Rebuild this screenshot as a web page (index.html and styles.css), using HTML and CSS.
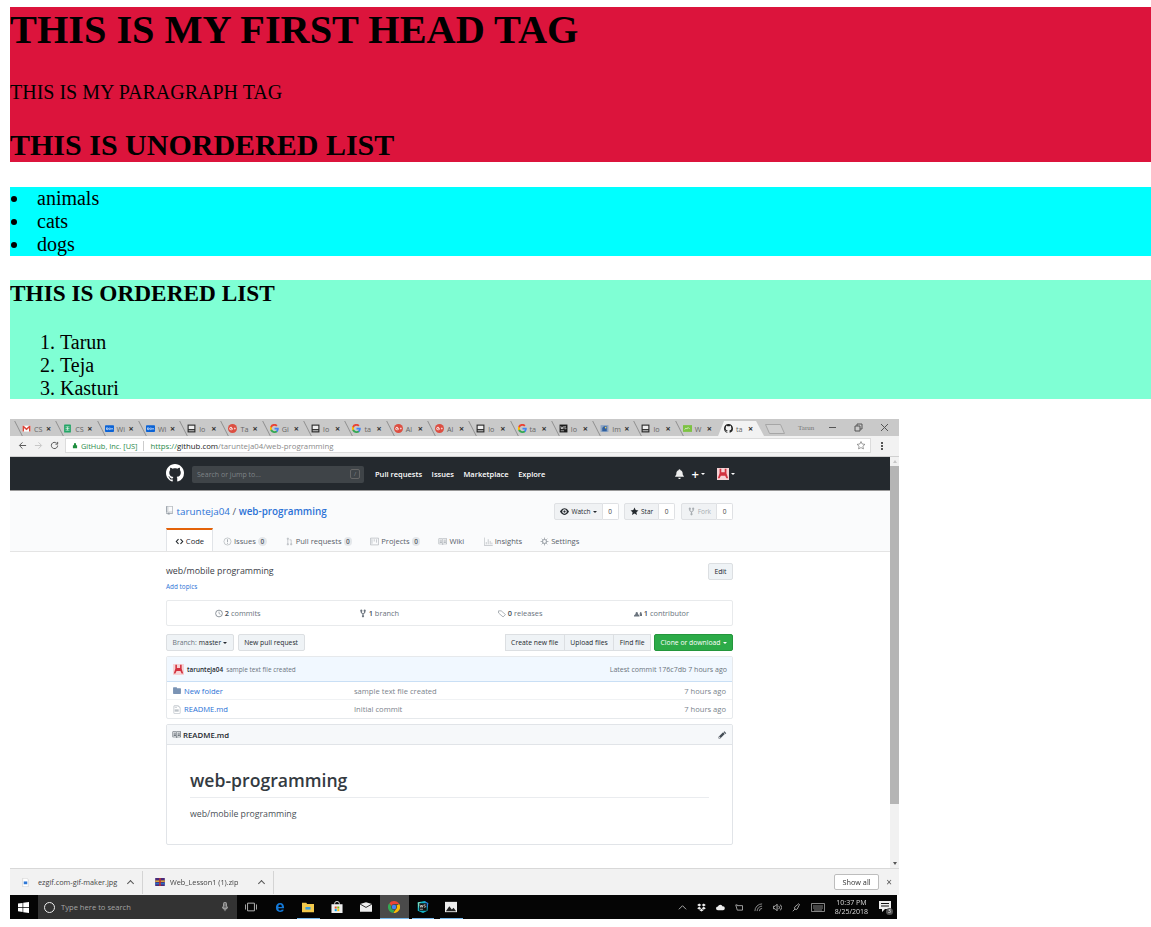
FILE: index.html
```html
<!DOCTYPE html>
<html>
<head>
<meta charset="utf-8">
<title>My first page</title>
<link rel="stylesheet" href="styles.css">
</head>
<body>

<svg class="sprite" xmlns="http://www.w3.org/2000/svg">
  <symbol id="i-github" viewBox="0 0 16 16"><path d="M8 0C3.58 0 0 3.58 0 8c0 3.54 2.29 6.53 5.47 7.59.4.07.55-.17.55-.38 0-.19-.01-.82-.01-1.49-2.01.37-2.53-.49-2.69-.94-.09-.23-.48-.94-.82-1.13-.28-.15-.68-.52-.01-.53.63-.01 1.08.58 1.23.82.72 1.21 1.87.87 2.33.66.07-.52.28-.87.51-1.07-1.78-.2-3.64-.89-3.64-3.95 0-.87.31-1.59.82-2.15-.08-.2-.36-1.02.08-2.12 0 0 .67-.21 2.2.82.64-.18 1.32-.27 2-.27.68 0 1.36.09 2 .27 1.53-1.04 2.2-.82 2.2-.82.44 1.1.16 1.92.08 2.12.51.56.82 1.27.82 2.15 0 3.07-1.87 3.75-3.65 3.95.29.25.54.73.54 1.48 0 1.07-.01 1.93-.01 2.2 0 .21.15.46.55.38A8.013 8.013 0 0 0 16 8c0-4.42-3.58-8-8-8z"/></symbol>
  <symbol id="i-gmail" viewBox="0 0 16 16"><rect x="1" y="3" width="14" height="10.5" fill="#fff"/><path d="M1 13.5V3h2l5 4.5L13 3h2v10.5h-2.5V7L8 11 3.5 7v6.5z" fill="#db4437"/></symbol>
  <symbol id="i-sheets" viewBox="0 0 16 16"><rect x="2" y="1" width="12" height="14" rx="1" fill="#23a566"/><path d="M4.5 5h7M4.5 8h7M4.5 11h7M8 5v6" stroke="#fff" fill="none"/></symbol>
  <symbol id="i-box" viewBox="0 0 16 16"><rect x="0" y="2" width="16" height="12" rx="1.5" fill="#0b63d6"/><path d="M3 10.5V6M3 8.5a1.4 1.4 0 1 0 3 0 1.4 1.4 0 1 0-3 0M7 8.5a1.4 1.4 0 1 0 3 0 1.4 1.4 0 1 0-3 0M11 7l3 3M14 7l-3 3" stroke="#fff" fill="none"/></symbol>
  <symbol id="i-dark" viewBox="0 0 16 16"><rect x="1" y="1" width="14" height="14" fill="#2b2b2b"/><rect x="3" y="3" width="10" height="6" fill="#eee"/><path d="M3 11h10v2H3z" fill="#bbb"/></symbol>
  <symbol id="i-gplus" viewBox="0 0 16 16"><circle cx="8" cy="8" r="8" fill="#dc4e41"/><path d="M8.5 7.5H5.5v1.4h1.6a1.7 1.7 0 1 1-.5-2l1-1a3 3 0 1 0 1 2.2zM10.5 7.5h1.2V6.3h1v1.2h1.2v1h-1.2v1.2h-1V8.500h-1.200z" fill="#fff"/></symbol>
  <symbol id="i-google" viewBox="0 0 16 16"><path d="M15.600 8.200c0-.6-.1-1.100-.2-1.600H8v3h4.300a3.700 3.700 0 0 1-1.600 2.400v2h2.600c1.500-1.400 2.300-3.400 2.300-5.800z" fill="#4285f4"/><path d="M8 16c2.200 0 4-.7 5.300-2l-2.600-2c-.7.500-1.600.8-2.700.8-2.100 0-3.900-1.400-4.500-3.300H.5v2.100A8 8 0 0 0 8 16z" fill="#34a853"/><path d="M3.500 9.500a4.800 4.800 0 0 1 0-3V4.400H.5a8 8 0 0 0 0 7.200z" fill="#fbbc05"/><path d="M8 3.200c1.200 0 2.200.4 3.100 1.200l2.300-2.300A8 8 0 0 0 .5 4.400l3 2.100C4.100 4.600 5.900 3.200 8 3.200z" fill="#ea4335"/></symbol>
  <symbol id="i-chrome" viewBox="0 0 16 16"><path d="M8 0a8 8 0 0 1 6.930 4H8a4 4 0 0 0-3.700 2.500L1.700 3A8 8 0 0 1 8 0z" fill="#ea4335"/><path d="M14.930 4A8 8 0 0 1 7 16l3.700-5A4 4 0 0 0 11.500 6z" fill="#fbbc05"/><path d="M7 16A8 8 0 0 1 1.700 3l2.600 3.500a4 4 0 0 0 4 5.500z" fill="#34a853"/><circle cx="8" cy="8" r="3" fill="#4285f4"/></symbol>
  <symbol id="i-ws" viewBox="0 0 16 16"><rect x="1" y="1" width="14" height="14" fill="#1b1b1b"/><path d="M3 4l1.200 5L5.500 5l1.300 4L8 4M9.500 8c1 1 3 .8 3-.3S9.500 6.500 9.500 5.300s2-1.300 3-.5M3 12h6" stroke="#fff" fill="none"/></symbol>
  <symbol id="i-ws-app" viewBox="0 0 16 16"><path d="M1 2l9-2 5 3-1 10-6 3-7-3z" fill="#13b5c9"/><path d="M10 0l5 3-1 6z" fill="#2f7be0"/><path d="M1 2l4-1-3 9z" fill="#7de0c0"/><rect x="3" y="3" width="10" height="10" fill="#111"/><path d="M4 5l1 3.500L6 5.500l1 3L8 5M9 8c.8.6 2.500.5 2.500-.4S9 6.500 9 5.700s1.700-1 2.500-.4M4 11h4" stroke="#fff" stroke-width=".8" fill="none"/></symbol>
  <symbol id="i-python" viewBox="0 0 16 16"><rect x="1" y="2" width="14" height="12" fill="#8aa3c4"/><path d="M4 13V7l3-3h5v9z" fill="#2f5f9e"/><circle cx="10" cy="6.500" r="1.400" fill="#f4d35e"/></symbol>
  <symbol id="i-grn" viewBox="0 0 16 16"><rect x="0" y="2" width="16" height="12" fill="#7cc242"/><path d="M3 10l2-3 2 2 2-3 3 3" stroke="#fff" fill="none"/></symbol>
  <symbol id="i-repo" viewBox="0 0 12 16"><path d="M4 9H3V8h1zm0-3H3v1h1zm0-2H3v1h1zm0-2H3v1h1zm8-1v12c0 .55-.45 1-1 1H6v2l-1.500-1.500L3 16v-2H1c-.55 0-1-.45-1-1V1c0-.55.45-1 1-1h10c.55 0 1 .45 1 1zm-1 10H1v2h2v-1h3v1h5zm0-10H2v9h9z"/></symbol>
  <symbol id="i-star" viewBox="0 0 14 16"><path d="M14 6l-4.900-.64L7 1 4.900 5.360 0 6l3.600 3.260L2.670 14 7 11.670 11.330 14l-.93-4.740z"/></symbol>
  <symbol id="i-eye" viewBox="0 0 16 16"><path d="M8.060 2C3 2 0 8 0 8s3 6 8.060 6C13 14 16 8 16 8s-3-6-7.940-6zM8 12c-2.200 0-4-1.780-4-4 0-2.200 1.800-4 4-4 2.220 0 4 1.800 4 4 0 2.220-1.780 4-4 4zm2-4c0 1.110-.89 2-2 2-1.110 0-2-.89-2-2 0-1.110.89-2 2-2 1.110 0 2 .89 2 2z"/></symbol>
  <symbol id="i-fork" viewBox="0 0 10 16"><path d="M8 1a1.990 1.990 0 0 0-1 3.700V6L5 8 3 6V4.700A1.990 1.990 0 0 0 2 1a1.990 1.990 0 0 0-1 3.700V6.500l3 3v1.800A1.990 1.990 0 0 0 5 15a1.990 1.990 0 0 0 1-3.700V9.500l3-3V4.700A1.990 1.990 0 0 0 8 1z"/></symbol>
  <symbol id="i-folder" viewBox="0 0 14 16"><path d="M13 4H7V3c0-.66-.31-1-1-1H1c-.55 0-1 .45-1 1v10c0 .55.45 1 1 1h12c.55 0 1-.45 1-1V5c0-.55-.45-1-1-1z"/></symbol>
  <symbol id="i-file" viewBox="0 0 12 16"><path d="M6 5H2V4h4zM2 8h7V7H2zm0 2h7V9H2zm0 2h7v-1H2zm10-7.500V14c0 .55-.45 1-1 1H1c-.55 0-1-.45-1-1V2c0-.55.45-1 1-1h7.500zM11 5L8 2H1v12h10z"/></symbol>
  <symbol id="i-book" viewBox="0 0 16 16"><path d="M3 5h4v1H3zm0 3h4V7H3zm0 2h4V9H3zm11-5h-4v1h4zm0 2h-4v1h4zm0 2h-4v1h4zm2-6v9c0 .55-.45 1-1 1H9.500l-1 1-1-1H2c-.55 0-1-.45-1-1V3c0-.55.45-1 1-1h5.500l1 1 1-1H15c.55 0 1 .45 1 1zM8 3.500L7.500 3H2v9h6zm7-.5H9.500l-.5.5V12h6z"/></symbol>
  <symbol id="i-avatar" viewBox="0 0 14 14"><rect width="14" height="14" fill="#f6d3d6"/><path d="M3 1h2v4h4V1h2v5l2 6h-2L9.500 9h-5L3 12H1l2-6z" fill="#d2323f"/></symbol>
  <symbol id="i-pencil" viewBox="0 0 14 16"><path d="M0 12v3h3l8-8-3-3zm3 2H1v-2h1v1h1zM10.300 9L13.700 5.600l-3.300-3.300L9 3.700 12.300 7z"/></symbol>
</svg>

<section class="head-box">
  <h1>THIS IS MY FIRST HEAD TAG</h1>
  <p>THIS IS MY PARAGRAPH TAG</p>
  <h2>THIS IS UNORDERED LIST</h2>
</section>

<ul class="animal-list">
  <li>animals</li>
  <li>cats</li>
  <li>dogs</li>
</ul>

<section class="name-box">
  <h3>THIS IS ORDERED LIST</h3>
  <ol>
    <li>Tarun</li>
    <li>Teja</li>
    <li>Kasturi</li>
  </ol>
</section>

<div class="shot">

  <div class="tabs">
    <div class="tab"><svg class="ico"><use href="#i-gmail"/></svg><span>CS</span><b>×</b></div>
    <div class="tab"><svg class="ico"><use href="#i-sheets"/></svg><span>CS</span><b>×</b></div>
    <div class="tab"><svg class="ico"><use href="#i-box"/></svg><span>Wi</span><b>×</b></div>
    <div class="tab"><svg class="ico"><use href="#i-box"/></svg><span>Wi</span><b>×</b></div>
    <div class="tab"><svg class="ico"><use href="#i-dark"/></svg><span>lo</span><b>×</b></div>
    <div class="tab"><svg class="ico"><use href="#i-gplus"/></svg><span>Ta</span><b>×</b></div>
    <div class="tab"><svg class="ico"><use href="#i-google"/></svg><span>Gi</span><b>×</b></div>
    <div class="tab"><svg class="ico"><use href="#i-dark"/></svg><span>lo</span><b>×</b></div>
    <div class="tab"><svg class="ico"><use href="#i-google"/></svg><span>ta</span><b>×</b></div>
    <div class="tab"><svg class="ico"><use href="#i-gplus"/></svg><span>Al</span><b>×</b></div>
    <div class="tab"><svg class="ico"><use href="#i-gplus"/></svg><span>Al</span><b>×</b></div>
    <div class="tab"><svg class="ico"><use href="#i-dark"/></svg><span>lo</span><b>×</b></div>
    <div class="tab"><svg class="ico"><use href="#i-google"/></svg><span>ta</span><b>×</b></div>
    <div class="tab"><svg class="ico"><use href="#i-ws"/></svg><span>lo</span><b>×</b></div>
    <div class="tab"><svg class="ico"><use href="#i-python"/></svg><span>Im</span><b>×</b></div>
    <div class="tab"><svg class="ico"><use href="#i-dark"/></svg><span>lo</span><b>×</b></div>
    <div class="tab"><svg class="ico"><use href="#i-grn"/></svg><span>W</span><b>×</b></div>
    <div class="tab tab-active"><svg class="ico"><use href="#i-github"/></svg><span>ta</span><b>×</b></div>
    <svg class="tab-new" viewBox="0 0 20 10"><path d="M.5.500h15l4 9h-15z" fill="#d0d0d0" stroke="#a6a6a6"/></svg>
    <div class="win-user">Tarun</div>
    <div class="win-btns">
      <svg viewBox="0 0 9 9"><path d="M1 4.500h7" stroke="#555" fill="none"/></svg>
      <svg viewBox="0 0 9 9"><path d="M1 3h5v5H1zM3 3V1h5v5H6" stroke="#555" fill="none"/></svg>
      <svg viewBox="0 0 9 9"><path d="M1 1l7 7M8 1L1 8" stroke="#555" fill="none"/></svg>
    </div>
  </div>

  <div class="toolbar">
    <svg class="nav-ico" viewBox="0 0 10 10"><path d="M9 5H2M5 1.500L1.500 5 5 8.500" stroke="#5a5a5a" stroke-width="1.100" fill="none"/></svg>
    <svg class="nav-ico" viewBox="0 0 10 10"><path d="M1 5h7M5 1.500L8.500 5 5 8.500" stroke="#c6c6c6" stroke-width="1.100" fill="none"/></svg>
    <svg class="nav-ico" viewBox="0 0 10 10"><path d="M8.500 5A3.500 3.500 0 1 1 7.400 2.400M8.500 1v2.500H6" stroke="#5a5a5a" stroke-width="1.100" fill="none"/></svg>
    <div class="omni">
      <svg class="lock" viewBox="0 0 8 10"><path d="M1 4.500h6V9H1zM2.500 4.500V3a1.500 1.500 0 0 1 3 0v1.500" fill="#1e8e3e"/></svg>
      <span class="omni-org">GitHub, Inc. [US]</span>
      <span class="omni-url"><em>https://</em><i>github.com</i>/tarunteja04/web-programming</span>
      <svg class="omni-star" viewBox="0 0 14 16"><use href="#i-star" fill="none" stroke="#555"/></svg>
    </div>
    <div class="dots"><i></i><i></i><i></i></div>
  </div>

  <div class="viewport">
    <div class="page">

      <header class="gh-bar">
        <div class="gh-left">
          <svg class="gh-logo"><use href="#i-github"/></svg>
          <div class="gh-search"><span>Search or jump to...</span><kbd>/</kbd></div>
          <nav class="gh-nav"><a>Pull requests</a><a>Issues</a><a>Marketplace</a><a>Explore</a></nav>
        </div>
        <div class="gh-right">
          <svg class="gh-bell" viewBox="0 0 14 16"><path d="M13.990 11.500c-1.200-1.500-2-2-2-5 0-2.500-1.800-4-3.500-4.500C8.500 1 8 .5 7 .5S5.500 1 5.500 2C3.800 2.500 2 4 2 6.500c0 3-.8 3.500-2 5v1h14zM7 16c1.100 0 2-.9 2-2H5c0 1.100.9 2 2 2z"/></svg>
          <span class="gh-plus">+<small></small></span>
          <span class="gh-user"><svg><use href="#i-avatar"/></svg><small></small></span>
        </div>
      </header>

      <div class="repo-head">
        <div class="wrap repo-top">
          <div class="repo-name">
            <svg class="repo-ico"><use href="#i-repo"/></svg>
            <a>tarunteja04</a> <span>/</span> <a><strong>web-programming</strong></a>
          </div>
          <div class="repo-actions">
            <div class="counter"><span class="cbtn"><svg><use href="#i-eye"/></svg>Watch <small></small></span><span class="cnum">0</span></div>
            <div class="counter"><span class="cbtn"><svg><use href="#i-star"/></svg>Star</span><span class="cnum">0</span></div>
            <div class="counter is-off"><span class="cbtn"><svg><use href="#i-fork"/></svg>Fork</span><span class="cnum">0</span></div>
          </div>
        </div>
        <nav class="wrap repo-tabs">
          <a class="rtab rtab-on"><svg viewBox="0 0 14 16"><path d="M9.500 3L8 4.500 11.500 8 8 11.500 9.500 13 14 8zm-5 0L0 8l4.500 5L6 11.500 2.500 8 6 4.500z"/></svg>Code</a>
          <a class="rtab"><svg viewBox="0 0 14 16"><circle cx="7" cy="8" r="6.300" fill="none" stroke="currentColor"/><path d="M6.200 4h1.600v5H6.200zM6.200 10.200h1.600V12H6.200z"/></svg>Issues <em>0</em></a>
          <a class="rtab"><svg viewBox="0 0 12 16"><path d="M3 4v8M9 12V5H6M2 2h2v2H2zM2 12h2v2H2zM8 12h2v2H8z" fill="none" stroke="currentColor"/></svg>Pull requests <em>0</em></a>
          <a class="rtab"><svg viewBox="0 0 15 16"><path d="M.5 2h14v12H.5zM3 4v8M7 4v4M11 4v6" fill="none" stroke="currentColor"/></svg>Projects <em>0</em></a>
          <a class="rtab rtab-wiki"><svg><use href="#i-book"/></svg>Wiki</a>
          <a class="rtab"><svg viewBox="0 0 16 16"><path d="M.5 1v14h15M4 13V9M7.500 13V4M11 13V7M14 13v-3" fill="none" stroke="currentColor"/></svg>Insights</a>
          <a class="rtab"><svg viewBox="0 0 16 16"><circle cx="8" cy="8" r="3.500" fill="none" stroke="currentColor" stroke-width="2"/><path d="M8 1v3M8 12v3M1 8h3M12 8h3M3 3l2 2M11 11l2 2M13 3l-2 2M5 11l-2 2" stroke="currentColor" stroke-width="1.500"/></svg>Settings</a>
        </nav>
      </div>

      <main class="wrap repo-main">
        <div class="about">
          <div>
            <div class="about-text">web/mobile programming</div>
            <a class="add-topics">Add topics</a>
          </div>
          <span class="btn btn-edit">Edit</span>
        </div>

        <div class="stats">
          <div><svg viewBox="0 0 14 16"><circle cx="7" cy="8" r="6" fill="none" stroke="currentColor" stroke-width="1.300"/><path d="M7 4.500V8l2.500 1.500" fill="none" stroke="currentColor"/></svg><b>2</b> commits</div>
          <div><svg><use href="#i-fork"/></svg><b>1</b> branch</div>
          <div><svg viewBox="0 0 15 16"><path d="M1 3h5l8 7-4.500 4.500L1 7z" fill="none" stroke="currentColor"/></svg><b>0</b> releases</div>
          <div><svg viewBox="0 0 16 16"><path d="M16 13h-4v-2l-1-2c1-1 .7-1.500 1-3 .4-1.500 2.500-1.500 3 0 .3 1.500 0 2 1 3zM11 14H0v-2l2-2c1.500-1 1-1.500 1.300-3.500.4-2 3.900-2 4.400 0C8 8.500 7.500 9 9 10l2 2z"/></svg><b>1</b> contributor</div>
        </div>

        <div class="file-nav">
          <div class="file-nav-left">
            <span class="btn"><span class="muted">Branch:</span> master <small></small></span>
            <span class="btn">New pull request</span>
          </div>
          <div class="file-nav-right">
            <div class="btn-group"><span class="btn">Create new file</span><span class="btn">Upload files</span><span class="btn">Find file</span></div>
            <span class="btn btn-green">Clone or download <small></small></span>
          </div>
        </div>

        <div class="files">
          <div class="commit-tease">
            <div class="tease-left"><svg><use href="#i-avatar"/></svg><b>tarunteja04</b> <span>sample text file created</span></div>
            <div class="tease-right">Latest commit 176c7db 7 hours ago</div>
          </div>
          <div class="file-row">
            <div class="fname"><svg class="ic-folder"><use href="#i-folder"/></svg><a>New folder</a></div>
            <div class="fmsg">sample text file created</div>
            <div class="fage">7 hours ago</div>
          </div>
          <div class="file-row">
            <div class="fname"><svg class="ic-file"><use href="#i-file"/></svg><a>README.md</a></div>
            <div class="fmsg">Initial commit</div>
            <div class="fage">7 hours ago</div>
          </div>
        </div>

        <div class="readme">
          <div class="readme-head">
            <div><svg><use href="#i-book"/></svg>README.md</div>
            <svg class="pencil"><use href="#i-pencil"/></svg>
          </div>
          <div class="readme-body">
            <h4>web-programming</h4>
            <p>web/mobile programming</p>
          </div>
        </div>
      </main>
    </div>

    <div class="scroll">
      <span class="arrow up"></span>
      <div class="thumb"></div>
      <span class="arrow down"></span>
    </div>
  </div>

  <div class="downloads">
    <div class="dl-item">
      <svg class="dl-ico" viewBox="0 0 10 12"><path d="M1 0h6l2 2v10H1z" fill="#fff" stroke="#aaa" stroke-width=".5"/><rect x="2.500" y="4.500" width="5" height="4" fill="#2f78d6"/></svg>
      <span class="dl-name">ezgif.com-gif-maker.jpg</span><span class="caret"></span>
    </div>
    <div class="dl-item dl-zip">
      <svg class="dl-ico" viewBox="0 0 12 10"><rect width="12" height="10" fill="#4a2a7a"/><rect x="0" y="3" width="12" height="2" fill="#d8a23a"/><rect x="0" y="6" width="12" height="2" fill="#2b6fc2"/><rect x="5" width="2" height="10" fill="#b33"/></svg>
      <span class="dl-name">Web_Lesson1 (1).zip</span><span class="caret"></span>
    </div>
    <div class="dl-end"><span class="show-all">Show all</span><span class="dl-close">×</span></div>
  </div>

  <div class="taskbar">
    <svg class="tb-start" viewBox="0 0 12 12"><path d="M0 1.700L5 1v4.500H0zM5.700.9L12 0v5.500H5.700zM0 6.200h5v4.700l-5-.7zM5.700 6.200H12V12l-6.300-.9z" fill="#fff"/></svg>
    <div class="tb-search">
      <i class="tb-circle"></i><span>Type here to search</span>
      <svg class="tb-mic" viewBox="0 0 8 12"><path d="M2 1.500a2 2 0 0 1 4 0v4a2 2 0 0 1-4 0zM.5 5.500a3.500 3.500 0 0 0 7 0M4 9v2.500" stroke="#bbb" fill="#777"/></svg>
    </div>
    <div class="tb-app"><svg viewBox="0 0 14 12"><path d="M3 1.500h8v9H3zM.5 3v6M13.500 3v6" stroke="#ccc" fill="none"/></svg></div>
    <div class="tb-app"><span class="tb-edge">e</span></div>
    <div class="tb-app tb-open"><svg viewBox="0 0 14 12"><path d="M0 1h5l1 1.500h8V12H0z" fill="#f2c94c"/><path d="M4 6h6v3H4z" fill="#3aa0e0"/></svg></div>
    <div class="tb-app"><svg viewBox="0 0 12 13"><path d="M0 3.500h12V13H0z" fill="#eee"/><path d="M3.500 4V2.500a2.500 2 0 0 1 5 0V4" stroke="#eee" fill="none"/><rect x="3.500" y="6" width="2.200" height="2.200" fill="#e5502a"/><rect x="6.300" y="6" width="2.200" height="2.200" fill="#7fba00"/><rect x="3.500" y="8.800" width="2.200" height="2.200" fill="#00a4ef"/><rect x="6.300" y="8.800" width="2.200" height="2.200" fill="#ffb900"/></svg></div>
    <div class="tb-app"><svg viewBox="0 0 14 11"><path d="M0 2l7-2 7 2v9H0z" fill="#eee"/><path d="M0 2l7 4 7-4" stroke="#111" fill="none"/></svg></div>
    <div class="tb-app tb-chrome tb-open"><svg><use href="#i-chrome"/></svg></div>
    <div class="tb-app tb-open"><svg><use href="#i-ws-app"/></svg></div>
    <div class="tb-app tb-open"><svg viewBox="0 0 14 12"><rect width="14" height="12" fill="#eee"/><path d="M1 11l4-6 3 4 2-2 3 4z" fill="#222"/></svg></div>
    <div class="tray">
      <svg viewBox="0 0 10 6"><path d="M1 5l4-4 4 4" stroke="#bbb" fill="none"/></svg>
      <svg viewBox="0 0 10 9"><path d="M2.500 0L4.800 1.700 2.500 3.400.2 1.700zM7.500 0l2.300 1.700-2.300 1.700-2.300-1.700zM2.500 3.700l2.300 1.700-2.300 1.700L.2 5.400zM7.500 3.700l2.300 1.700-2.300 1.700-2.300-1.700zM5 6l2.300 1.600L5 9 2.700 7.600z" fill="#eee"/></svg>
      <svg viewBox="0 0 12 7"><path d="M2.500 7a2.500 2.500 0 0 1 0-5A3.500 3.500 0 0 1 9 2a2.500 2.500 0 0 1 .5 5z" fill="#eee"/></svg>
      <svg viewBox="0 0 12 9"><path d="M1 1h2v1h7v6H3z" stroke="#ccc" fill="none"/></svg>
      <svg viewBox="0 0 10 10"><path d="M1 9a8 8 0 0 1 8-8M3.500 9A5.500 5.500 0 0 1 9 3.500M6 9a3 3 0 0 1 3-3" stroke="#999" fill="none"/></svg>
      <svg viewBox="0 0 11 10"><path d="M.5 3.500h2L5 1v8L2.500 6.500h-2zM7 3a3 3 0 0 1 0 4M9 1.500a5 5 0 0 1 0 7" stroke="#ccc" fill="none"/></svg>
      <svg viewBox="0 0 12 12"><path d="M1 11l3-3M4 8a2 2 0 0 0 3 0l3-6-1-1-5 4a2 2 0 0 0 0 3z" stroke="#ccc" fill="none"/></svg>
      <svg class="tray-kbd" viewBox="0 0 14 9"><path d="M.5.500h13v8H.5zM2 3h10M2 5h10M3 7h8" stroke="#bbb" fill="none" stroke-width=".7"/></svg>
      <div class="clock"><span>10:37 PM</span><span>8/25/2018</span></div>
      <div class="notif"><svg viewBox="0 0 12 11"><path d="M0 0h12v8H6l-3 3V8H0z" fill="#eee"/><path d="M2 2.500h8M2 5h8" stroke="#111"/></svg><em>3</em></div>
    </div>
  </div>

</div>

</body>
</html>
```

FILE: styles.css
```css
body {
  margin: 7px 0 0 10px;
  font-family: "Liberation Serif", "Times New Roman", serif;
  color: #000;
  background: #fff;
}

.sprite {
  display: none;
}

/* the three coloured boxes */
.head-box {
  background: #dc143c;
  padding: 0;
  height: 155px;
}
.head-box h1 {
  margin: 0 0 27px;
  font-size: 40.3px;
  line-height: 46px;
}
.head-box p {
  margin: 0 0 24px;
  font-size: 20px;
  line-height: 24px;
}
.head-box h2 {
  margin: 0;
  font-size: 30px;
  line-height: 34px;
}

.animal-list {
  margin: 25px 0 24px;
  padding: 0 0 0 20px;
  background: #00ffff;
  font-size: 20px;
  line-height: 23px;
}
.animal-list li {
  padding-left: 7px;
}

.name-box {
  background: #7fffd4;
  height: 119px;
}
.name-box h3 {
  margin: 0 0 24px;
  font-size: 23.3px;
  line-height: 27px;
}
.name-box ol {
  margin: 0;
  padding: 0 0 0 50px;
  font-size: 20px;
  line-height: 23px;
}

/* the pasted screenshot */
.shot {
  margin-top: 20px;
  width: 889px;
  height: 500px;
  display: flex;
  flex-direction: column;
  overflow: hidden;
  font-family: "Open Sans", "Liberation Sans", sans-serif;
  font-size: 7.5px;
  color: #24292e;
  filter: blur(0.45px);
}

.tabs {
  height: 17px;
  flex: none;
  display: flex;
  align-items: center;
  padding-left: 5px;
  background: #c9c9c9;
}
.tab {
  position: relative;
  width: 41.3px;
  height: 17px;
  flex: none;
  box-sizing: border-box;
  padding: 2px 0 0 7px;
  display: flex;
  align-items: center;
  font-size: 7.2px;
  color: #666;
}
.tab::before {
  content: "";
  position: absolute;
  left: 3px;
  top: 2px;
  bottom: 0;
  border-left: 1px solid #8f8f8f;
  transform: skewX(27deg);
}
.tab .ico {
  width: 9px;
  height: 9px;
  flex: none;
  fill: #222;
}
.tab span {
  width: 10px;
  margin: 0 2px 0 3px;
  white-space: nowrap;
}
.tab b {
  font-size: 9px;
  line-height: 9px;
  color: #333;
}
.tab-active {
  width: 46px;
  padding-left: 6px;
  margin-left: 1px;
  background: #f2f2f2;
  clip-path: polygon(0 100%, 6px 2px, 38px 2px, 46px 100%);
}
.tab-active::before {
  display: none;
}
.tab-new {
  width: 20px;
  height: 10px;
  margin: 3px 0 0 1px;
  flex: none;
}
.win-user {
  margin-left: 13px;
  font-size: 7px;
  color: #777;
  width: 24px;
  font-family: "Liberation Serif", serif;
}
.win-btns {
  margin-left: 6px;
  display: flex;
  gap: 17px;
}
.win-btns svg {
  width: 9px;
  height: 9px;
}

.toolbar {
  height: 21px;
  flex: none;
  display: flex;
  align-items: center;
  padding: 0 0 1px 8px;
  box-sizing: border-box;
  background: #f2f2f2;
  border-bottom: 1px solid #d0d0d0;
}
.nav-ico {
  width: 9px;
  height: 9px;
  margin-right: 7px;
  flex: none;
}
.omni {
  margin-left: -1px;
  width: 806px;
  height: 15px;
  display: flex;
  align-items: center;
  padding: 0 5px 0 6px;
  box-sizing: border-box;
  background: #fff;
  border: 1px solid #dcdcdc;
  font-size: 7.4px;
}
.lock {
  width: 6px;
  height: 7px;
  margin-right: 3px;
}
.omni-org {
  color: #2b8a4b;
  padding-right: 6px;
  margin-right: 6px;
  border-right: 1px solid #ccc;
}
.omni-url {
  color: #8a8a8a;
  flex: 1;
  font-size: 7.8px;
}
.omni-url em {
  font-style: normal;
  color: #2b8a4b;
}
.omni-url i {
  font-style: normal;
  color: #222;
}
.omni-star {
  width: 8px;
  height: 9px;
}
.dots {
  margin-left: 10px;
  display: flex;
  flex-direction: column;
  gap: 1px;
}
.dots i {
  width: 2px;
  height: 2px;
  background: #555;
}

.viewport {
  flex: 1;
  display: flex;
  min-height: 0;
}
.page {
  flex: 1;
  overflow: hidden;
  background: #fff;
}
.wrap {
  width: 567px;
  margin-left: 156px;
}

.scroll {
  width: 9px;
  flex: none;
  display: flex;
  flex-direction: column;
  align-items: center;
  background: #f1f1f1;
}
.thumb {
  width: 9px;
  height: 338px;
  margin-top: 3px;
  background: #b5b5b5;
}
.arrow {
  width: 0;
  height: 0;
  margin-top: 3px;
  border-left: 2.5px solid transparent;
  border-right: 2.5px solid transparent;
}
.arrow.up {
  border-bottom: 3px solid #c6c6c6;
}
.arrow.down {
  margin-top: auto;
  margin-bottom: 3px;
  border-top: 3px solid #555;
}

.gh-bar {
  height: 34px;
  display: flex;
  align-items: center;
  justify-content: space-between;
  box-sizing: border-box;
  border-bottom: 1px solid #999;
  padding: 1.5px 155px 0 156px;
  background: #24292e;
}
.gh-left {
  display: flex;
  align-items: center;
}
.gh-logo {
  width: 18px;
  height: 18px;
  margin-top: -2px;
  fill: #fff;
}
.gh-search {
  margin-left: 8px;
  width: 172px;
  height: 17px;
  display: flex;
  align-items: center;
  justify-content: space-between;
  padding: 0 4px 0 5px;
  box-sizing: border-box;
  border-radius: 2px;
  background: #3f4448;
  color: #7e8387;
  font-size: 7px;
}
.gh-search kbd {
  width: 10px;
  height: 10px;
  font-size: 6px;
  text-align: center;
  border: 1px solid #666;
  border-radius: 2px;
  box-sizing: border-box;
  font-family: inherit;
}
.gh-nav {
  margin-left: 11px;
  display: flex;
  gap: 9.5px;
  color: #fff;
  font-weight: 600;
  font-size: 7.5px;
}
.gh-right {
  display: flex;
  align-items: center;
  color: #fff;
}
.gh-bell {
  width: 9px;
  height: 10px;
  fill: #eee;
}
.gh-plus {
  margin-left: 8px;
  font-size: 13px;
  line-height: 12px;
  font-weight: 600;
  display: flex;
  align-items: center;
}
.gh-user {
  margin-left: 12px;
  display: flex;
  align-items: center;
}
.gh-user svg {
  width: 12px;
  height: 12px;
}
small {
  display: inline-block;
  margin-left: 2px;
  border-left: 2px solid transparent;
  border-right: 2px solid transparent;
  border-top: 2.5px solid currentColor;
  vertical-align: middle;
}

.repo-head {
  height: 61px;
  box-sizing: border-box;
  padding-top: 12px;
  background: #fafbfc;
  border-bottom: 1px solid #e4e4e4;
}
.repo-top {
  display: flex;
  justify-content: space-between;
  align-items: center;
  height: 17px;
}
.repo-name {
  margin-top: -2px;
  font-size: 9.85px;
  color: #586069;
}
.repo-name a {
  color: #2b72d6;
}
.repo-name strong {
  font-weight: 600;
}
.repo-ico {
  width: 7px;
  height: 9px;
  margin-right: 1px;
  fill: #959da5;
}
.repo-actions {
  display: flex;
  gap: 5.5px;
}
.counter {
  display: flex;
  height: 17px;
  font-size: 6.5px;
  font-weight: 500;
}
.cbtn {
  display: flex;
  align-items: center;
  padding: 0 5px;
  background: #f0f2f4;
  border: 1px solid #dfe1e4;
  border-radius: 2px 0 0 2px;
}
.cbtn svg {
  width: 9px;
  height: 9px;
  margin-right: 2px;
  fill: #24292e;
}
.cnum {
  width: 16px;
  display: flex;
  align-items: center;
  justify-content: center;
  box-sizing: border-box;
  background: #fff;
  border: 1px solid #dfe1e4;
  border-left: 0;
  border-radius: 0 2px 2px 0;
  color: #444;
}
.is-off .cbtn {
  color: #a8adb2;
}
.is-off .cbtn svg {
  fill: #a8adb2;
}
.repo-tabs {
  margin-top: 8px;
  display: flex;
  height: 23px;
}
.rtab {
  display: flex;
  align-items: center;
  padding: 3px 9px 0;
  font-size: 7.6px;
  color: #586069;
  white-space: nowrap;
}
.rtab svg {
  width: 9px;
  height: 9px;
  margin-right: 2px;
  fill: currentColor;
  color: #a0a6ac;
}
.rtab em {
  margin-left: 2px;
  padding: 0 2.5px;
  border-radius: 6px;
  background: #e4e7ea;
  font-style: normal;
  font-size: 6.5px;
  font-weight: 600;
}
.rtab-wiki {
  padding-right: 10.5px;
}
.rtab-on {
  width: 47px;
  margin-right: 1px;
  box-sizing: border-box;
  justify-content: center;
  padding: 1px 0 0;
  color: #24292e;
  background: #fff;
  border-top: 2px solid #e36209;
  border-left: 1px solid #e1e4e8;
  border-right: 1px solid #e1e4e8;
}
.rtab-on svg {
  color: #24292e;
}

.repo-main {
  padding-top: 12px;
}
.btn {
  display: inline-flex;
  align-items: center;
  height: 17px;
  box-sizing: border-box;
  padding: 0 5.5px;
  background: #eff3f6;
  border: 1px solid #dcdfe2;
  border-radius: 2px;
  font-size: 6.8px;
  font-weight: 500;
  white-space: nowrap;
}
.about {
  display: flex;
  justify-content: space-between;
}
.about-text {
  font-size: 8.85px;
  line-height: 15px;
  color: #3a4047;
}
.add-topics {
  display: block;
  margin-top: 3px;
  font-size: 6.4px;
  line-height: 10px;
  color: #2b72d6;
}
.btn-edit {
  margin-top: -1px;
  height: 17px;
}
.stats {
  margin-top: 8px;
  height: 26px;
  display: grid;
  grid-template-columns: repeat(4, 1fr);
  box-sizing: border-box;
  border: 1px solid #e8eaec;
  border-radius: 2px;
  font-size: 7.4px;
  color: #6a737d;
}
.stats div {
  display: flex;
  align-items: center;
  justify-content: center;
}
.stats svg {
  width: 8px;
  height: 9px;
  margin-right: 2px;
  fill: currentColor;
}
.stats b {
  margin-right: 2px;
  color: #444d56;
  font-weight: 600;
}
.file-nav {
  margin-top: 8px;
  display: flex;
  justify-content: space-between;
}
.file-nav-left {
  display: flex;
  gap: 4px;
}
.file-nav-right {
  display: flex;
  gap: 3px;
}
.muted {
  color: #6a737d;
  font-weight: 400;
  margin-right: 2px;
}
.btn-group {
  display: flex;
}
.btn-group .btn {
  margin-left: -1px;
  border-radius: 0;
}
.btn-green {
  background: #2cab48;
  border-color: #24963c;
  color: #fff;
}
.files {
  margin-top: 5px;
  border: 1px solid #e6e9ec;
  border-radius: 2px;
  box-sizing: border-box;
  height: 63px;
}
.commit-tease {
  height: 25px;
  display: flex;
  align-items: center;
  justify-content: space-between;
  box-sizing: border-box;
  padding: 0 5px 0 6px;
  background: #f1f8ff;
  border-bottom: 1px solid #c9dff5;
  font-size: 6.4px;
  color: #6a737d;
}
.tease-left {
  display: flex;
  align-items: center;
  gap: 3px;
}
.tease-left svg {
  width: 11px;
  height: 11px;
}
.tease-left b {
  color: #24292e;
  font-weight: 600;
}
.tease-right {
  font-size: 7.05px;
}
.file-row {
  height: 18px;
  display: grid;
  grid-template-columns: 181px 1fr 80px;
  align-items: center;
  box-sizing: border-box;
  padding: 0 6px 0 6px;
  border-bottom: 1px solid #f0f2f4;
  font-size: 7.6px;
  color: #7a838c;
}
.file-row:last-child {
  border-bottom: 0;
}
.fname {
  display: flex;
  align-items: center;
  gap: 3px;
  color: #2b72d6;
}
.fname svg {
  width: 8px;
  height: 9px;
}
.ic-folder {
  fill: #7a93b4;
}
.ic-file {
  fill: #a8b0b8;
}
.fage {
  text-align: right;
}
.readme {
  margin-top: 5px;
  height: 121px;
  box-sizing: border-box;
  border: 1px solid #e1e4e8;
  border-radius: 2px;
}
.readme-head {
  height: 20px;
  display: flex;
  align-items: center;
  justify-content: space-between;
  box-sizing: border-box;
  padding: 0 5px;
  background: #f6f8fa;
  border-bottom: 1px solid #e1e4e8;
  font-size: 7.8px;
  font-weight: 600;
}
.readme-head div {
  display: flex;
  align-items: center;
  gap: 2px;
}
.readme-head svg {
  width: 9px;
  height: 9px;
  fill: #444d56;
}
.readme-body {
  padding: 23px 23px 0;
}
.readme-body h4 {
  margin: 0;
  padding-bottom: 5px;
  border-bottom: 1px solid #eaecef;
  font-size: 17.6px;
  line-height: 24px;
  font-weight: 600;
  color: #333a41;
}
.readme-body p {
  margin: 10px 0 0;
  font-size: 8.75px;
  line-height: 12px;
  color: #4a5158;
}

.downloads {
  height: 27px;
  flex: none;
  display: flex;
  align-items: center;
  box-sizing: border-box;
  background: #f2f2f2;
  border-top: 1px solid #d8d8d8;
  color: #444;
  font-size: 7.3px;
}
.dl-item {
  width: 133px;
  height: 23px;
  display: flex;
  align-items: center;
  box-sizing: border-box;
  padding-left: 12px;
  border-right: 1px solid #d4d4d4;
}
.dl-zip {
  width: 131px;
}
.dl-ico {
  width: 7px;
  height: 9px;
  margin-right: 9px;
  flex: none;
}
.dl-zip .dl-ico {
  width: 10px;
  height: 8px;
  margin-right: 5px;
}
.dl-name {
  flex: 1;
  white-space: nowrap;
}
.caret {
  width: 4px;
  height: 4px;
  margin: 2px 9px 0 0;
  border-left: 1px solid #555;
  border-top: 1px solid #555;
  transform: rotate(45deg);
}
.dl-end {
  margin-left: auto;
  display: flex;
  align-items: center;
}
.show-all {
  width: 45px;
  height: 16px;
  display: flex;
  align-items: center;
  justify-content: center;
  box-sizing: border-box;
  background: #fff;
  border: 1px solid #bdbdbd;
  border-radius: 2px;
  color: #333;
}
.dl-close {
  width: 20px;
  text-align: center;
  font-size: 10px;
  color: #555;
}

.taskbar {
  height: 24px;
  flex: none;
  display: flex;
  align-items: center;
  margin-right: 2px;
  background: #050505;
}
.tb-start {
  width: 11px;
  height: 11px;
  flex: none;
  margin: 0 9px 0 8px;
}
.tb-search {
  width: 199px;
  height: 24px;
  display: flex;
  align-items: center;
  box-sizing: border-box;
  padding-left: 6px;
  background: #333;
  color: #a5a5a5;
  font-size: 7.6px;
}
.tb-circle {
  width: 11px;
  height: 11px;
  margin-right: 6px;
  box-sizing: border-box;
  border: 1.5px solid #eee;
  border-radius: 50%;
}
.tb-mic {
  width: 6px;
  height: 10px;
  margin-left: auto;
  margin-right: 9px;
}
.tb-app {
  position: relative;
  width: 28.6px;
  height: 24px;
  flex: none;
  display: flex;
  align-items: center;
  justify-content: center;
}
.tb-app svg {
  width: 12px;
  height: 12px;
}
.tb-open::after {
  content: "";
  position: absolute;
  left: 3px;
  right: 3px;
  bottom: 0;
  height: 1.5px;
  background: #76b9ed;
}
.tb-edge {
  font: bold 17px/20px "Liberation Sans", sans-serif;
  color: #1479d8;
}
.tb-chrome {
  background: #4a4a4a;
}
.tb-chrome::after {
  left: 0;
  right: 0;
}
.tray {
  margin-left: auto;
  display: flex;
  align-items: center;
  gap: 10px;
  color: #ddd;
  padding-right: 6px;
}
.tray > svg {
  width: 9px;
  height: 9px;
  flex: none;
}
.tray .tray-kbd {
  width: 14px;
}
.clock {
  display: flex;
  flex-direction: column;
  align-items: center;
  font-size: 7px;
  line-height: 9px;
}
.notif {
  position: relative;
  width: 12px;
  height: 12px;
  margin-left: 1px;
}
.notif svg {
  width: 12px;
  height: 11px;
}
.notif em {
  position: absolute;
  right: -2px;
  bottom: -2px;
  width: 7px;
  height: 7px;
  border-radius: 50%;
  background: #555;
  color: #fff;
  font-size: 5px;
  font-style: normal;
  line-height: 7px;
  text-align: center;
}
```
